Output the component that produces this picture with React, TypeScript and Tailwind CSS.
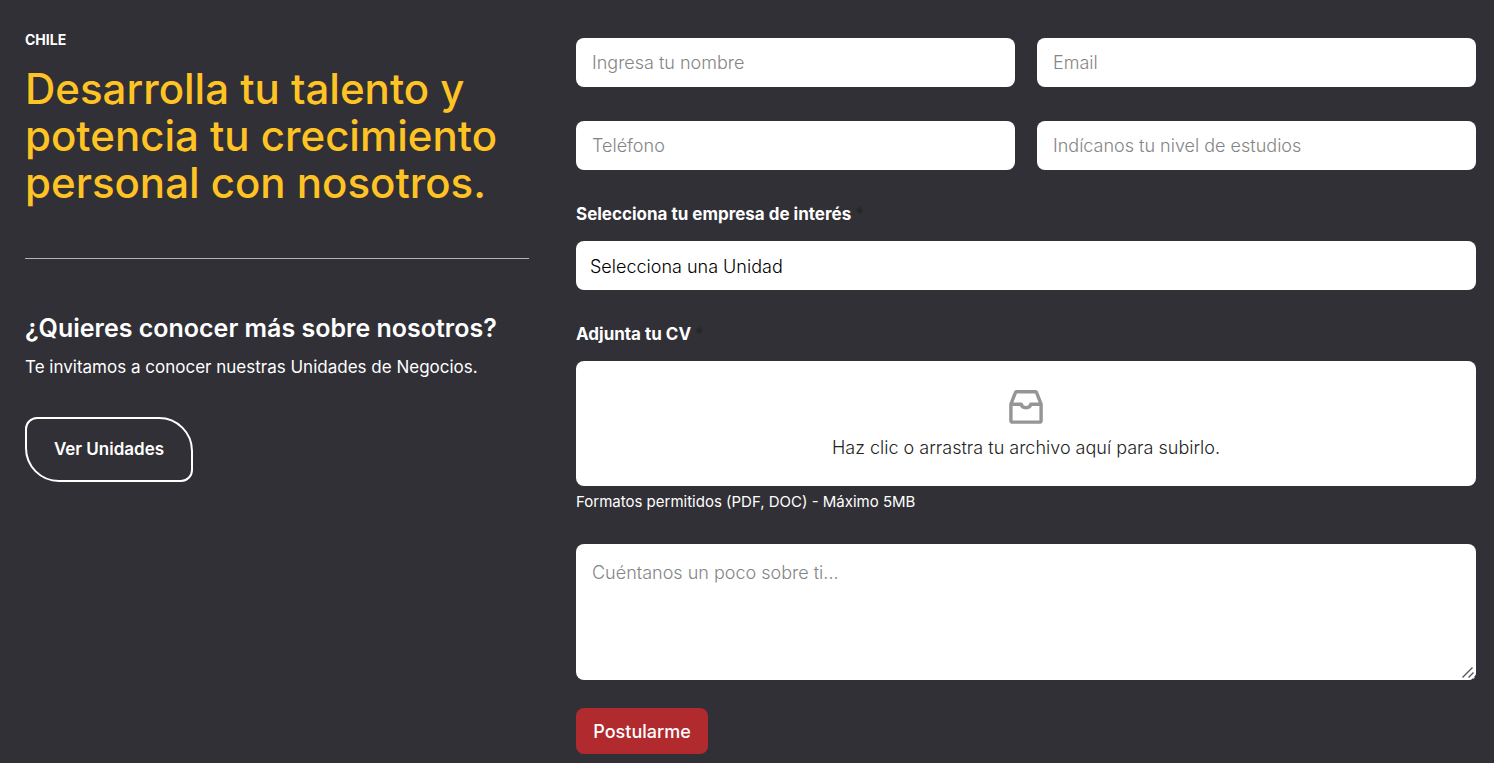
interface Field {
  id: string;
  type: string;
  placeholder: string;
}

const fields: Field[] = [
  { id: "nombre", type: "text", placeholder: "Ingresa tu nombre" },
  { id: "email", type: "email", placeholder: "Email" },
  { id: "telefono", type: "tel", placeholder: "Teléfono" },
  { id: "estudios", type: "text", placeholder: "Indícanos tu nivel de estudios" },
];

function InboxIcon() {
  return (
    <svg
      className="h-[34px] w-[34px]"
      viewBox="0 0 34 34"
      fill="none"
      stroke="#959595"
      strokeWidth="3.4"
      strokeLinejoin="round"
      aria-hidden="true"
    >
      <path d="M1.9 14.2V30.7a1.4 1.4 0 0 0 1.4 1.4H30.7a1.4 1.4 0 0 0 1.4-1.4V14.2L27.6 2.6a1.2 1.2 0 0 0-1.1-.8H7.5a1.2 1.2 0 0 0-1.1.8Z" />
      <path d="M2 14.2H12.2a4.9 4.4 0 0 0 9.6 0H32" />
    </svg>
  );
}

function ResizeGrip() {
  return (
    <svg
      className="pointer-events-none absolute right-0 bottom-0 h-4 w-4"
      viewBox="0 0 16 16"
      fill="none"
      stroke="#55555a"
      strokeWidth="1.4"
      aria-hidden="true"
    >
      <path d="M0 0H16V8a8 8 0 0 1-8 8H0Z" fill="#fff" stroke="none" />
      <path d="M2.5 13.5L12.5 3.5M8.5 13.5L13.5 8.5" />
    </svg>
  );
}

function Required() {
  return <span className="pl-1 font-normal text-[#232323]">*</span>;
}

export default function App() {
  return (
    <main className="grid min-h-screen grid-cols-[504fr_900fr] gap-[47px] bg-[#313036] pr-[18px] pl-[25px] font-['Inter','Liberation_Sans',sans-serif] text-white">
      {/* Intro */}
      <section className="pt-[30px]">
        <p className="text-sm font-bold">CHILE</p>
        <h1 className="mt-[15px] text-[42px] leading-[47px] font-medium text-[#ffc424]">
          Desarrolla tu talento y<br />
          potencia tu crecimiento
          <br />
          personal con nosotros.
        </h1>
        <hr className="mt-[52px] border-[#b4b4b6]" />
        <h2 className="mt-[53px] text-[25px] leading-8 font-semibold">
          ¿Quieres conocer más sobre nosotros?
        </h2>
        <p className="mt-[11px] text-[17px] leading-6">
          Te invitamos a conocer nuestras Unidades de Negocios.
        </p>
        <a
          href="#unidades"
          className="mt-[38px] inline-flex h-[65px] w-[168px] items-center justify-center rounded-tl-[12px] rounded-tr-[34px] rounded-br-[12px] rounded-bl-[34px] border-2 border-white text-[17px] font-semibold"
        >
          Ver Unidades
        </a>
      </section>

      {/* Application form */}
      <form className="pt-[38px]" onSubmit={(e) => e.preventDefault()}>
        <div className="grid grid-cols-2 gap-x-[22px] gap-y-[34px]">
          {fields.map((field) => (
            <input
              key={field.id}
              id={field.id}
              type={field.type}
              placeholder={field.placeholder}
              aria-label={field.placeholder}
              className="h-[49px] w-full rounded-lg bg-white px-4 text-[18px] font-light text-black placeholder:text-[#858585]"
            />
          ))}
        </div>

        <label htmlFor="empresa" className="mt-8 block text-[17px] leading-6 font-bold">
          Selecciona tu empresa de interés
          <Required />
        </label>
        <select
          id="empresa"
          className="mt-[15px] block h-[49px] w-full appearance-none rounded-lg bg-white px-[14px] pt-[2px] text-[18px] font-light text-black"
        >
          <option>Selecciona una Unidad</option>
        </select>

        <label htmlFor="cv" className="mt-8 block text-[17px] leading-6 font-bold">
          Adjunta tu CV
          <Required />
        </label>
        <label
          htmlFor="cv"
          className="relative mt-[15px] flex h-[125px] cursor-pointer flex-col items-center rounded-lg bg-white pt-[29px] text-[18px] leading-6 font-light text-[#232323]"
        >
          <InboxIcon />
          <span className="mt-3">Haz clic o arrastra tu archivo aquí para subirlo.</span>
          <input id="cv" type="file" accept=".pdf,.doc" className="sr-only" />
        </label>
        <p className="mt-1 text-[15px] leading-6">
          Formatos permitidos (PDF, DOC) - Máximo 5MB
        </p>

        <div className="relative mt-[30px]">
          <textarea
            id="mensaje"
            placeholder="Cuéntanos un poco sobre ti..."
            aria-label="Cuéntanos un poco sobre ti"
            className="block h-[136px] w-full resize-y rounded-lg bg-white px-4 py-[17px] text-[18px] leading-6 font-light text-black placeholder:text-[#858585]"
          />
          <ResizeGrip />
        </div>
        <button
          type="submit"
          className="mt-7 h-[46px] w-[132px] rounded-lg bg-[#b12a2e] text-[18px] font-medium"
        >
          Postularme
        </button>
      </form>
    </main>
  );
}
